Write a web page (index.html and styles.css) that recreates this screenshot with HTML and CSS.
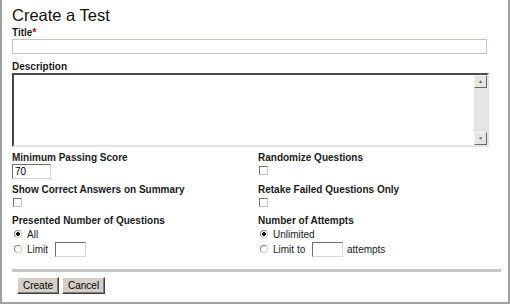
FILE: index.html
```html
<!DOCTYPE html>
<html lang="en">
<head>
    <meta charset="UTF-8">
    <title>Create a Test</title>
    <link rel="stylesheet" href="styles.css">
</head>
<body>

    <div class="panel">
        <h1>Create a Test</h1>

        <label class="lbl">Title<span class="req">*</span></label>
        <input type="text" class="text title-input">

        <label class="lbl">Description</label>
        <div class="textbox">
            <textarea></textarea>
            <div class="scroll">
                <span class="sbtn">&#9650;</span>
                <span class="track"></span>
                <span class="sbtn">&#9660;</span>
            </div>
        </div>

        <div class="grid">
            <div class="field">
                <label class="lbl">Minimum Passing Score</label>
                <input type="text" class="text score" value="70">
            </div>
            <div class="field">
                <label class="lbl">Randomize Questions</label>
                <input type="checkbox" class="check">
            </div>

            <div class="field">
                <label class="lbl">Show Correct Answers on Summary</label>
                <input type="checkbox" class="check">
            </div>
            <div class="field">
                <label class="lbl">Retake Failed Questions Only</label>
                <input type="checkbox" class="check">
            </div>

            <div class="field">
                <label class="lbl">Presented Number of Questions</label>
                <div class="opt"><input type="radio" name="num" class="radio" checked>All</div>
                <div class="opt"><input type="radio" name="num" class="radio">Limit <input type="text" class="text small"></div>
            </div>
            <div class="field">
                <label class="lbl">Number of Attempts</label>
                <div class="opt"><input type="radio" name="att" class="radio" checked>Unlimited</div>
                <div class="opt"><input type="radio" name="att" class="radio">Limit to <input type="text" class="text small">attempts</div>
            </div>
        </div>

        <div class="sep"></div>

        <div class="actions">
            <button class="btn">Create</button>
            <button class="btn">Cancel</button>
        </div>
    </div>

</body>
</html>
```

FILE: styles.css
```css
body {
    margin: 0;
    background-color: #fff;
    font-family: "Liberation Sans", Arial, sans-serif;
    color: #1a1a1a;
}

.panel {
    width: 510px;
    height: 304px;
    box-sizing: border-box;
    border: 2px solid #a0a0a0;
    border-top: none;
    padding: 5px 0 0 10px;
}

h1 {
    margin: 0;
    font-size: 16.5px;
    font-weight: normal;
    line-height: 21px;
    color: #111;
}

.lbl {
    display: block;
    font-size: 10px;
    font-weight: bold;
    line-height: 13px;
}
.req {
    color: #c00;
}

.text {
    box-sizing: border-box;
    height: 15px;
    margin: 0;
    padding: 0 2px;
    font-family: inherit;
    font-size: 10px;
    border: 1px solid;
    border-color: #6f6f6f #d8d8d8 #d8d8d8 #6f6f6f;
    background: #fff;
    outline: none;
}
.title-input {
    display: block;
    width: 475px;
    margin-bottom: 6px;
    border-color: #c4c4d6;
}
.score {
    display: block;
    width: 39px;
}
.small {
    width: 31px;
    margin: 0 4px 0 4px;
}

/* Description box with classic scrollbar */
.textbox {
    display: flex;
    width: 477px;
    height: 74px;
    box-sizing: border-box;
    border: 2px solid;
    border-color: #4a4a4a #e4e4e4 #e4e4e4 #4a4a4a;
    margin-bottom: 4px;
}
.textbox textarea {
    flex: 1;
    border: none;
    resize: none;
    outline: none;
    margin: 0;
    padding: 0;
}
.scroll {
    display: flex;
    flex-direction: column;
    width: 13px;
}
.sbtn {
    box-sizing: border-box;
    height: 13px;
    background: #e6e4de;
    border: 1px solid;
    border-color: #f4f4f4 #6a6a6a #6a6a6a #f4f4f4;
    font-size: 5px;
    line-height: 11px;
    text-align: center;
    color: #666;
}
.track {
    flex: 1;
    background: repeating-conic-gradient(#ececec 0 25%, #dedede 0 50%) 0 0 / 2px 2px;
}

.grid {
    display: grid;
    grid-template-columns: 246px 1fr;
    row-gap: 4px;
}

.check {
    -webkit-appearance: none;
    appearance: none;
    display: block;
    width: 9px;
    height: 9px;
    margin: 2px 0 3px 1px;
    border: 1px solid;
    border-color: #7a7a7a #c8c8c8 #c8c8c8 #7a7a7a;
    background: #fff;
}

.opt {
    display: flex;
    align-items: center;
    height: 14px;
    font-size: 10px;
    white-space: pre;
}
.opt + .opt {
    height: 16px;
}
.radio {
    -webkit-appearance: none;
    appearance: none;
    width: 8px;
    height: 8px;
    margin: 0 5px 0 2px;
    border-radius: 50%;
    border: 1px solid;
    border-color: #8a8a8a #d0d0d0 #d0d0d0 #8a8a8a;
    background: #fff;
}
.radio:checked {
    background: radial-gradient(circle, #111 0 1.6px, #fff 2.2px);
}

.sep {
    width: 489px;
    height: 3px;
    margin-top: 12px;
    background-color: #c6c6c6;
}

.actions {
    display: flex;
    gap: 3px;
    padding: 5px 0 0 5px;
}
.btn {
    height: 17px;
    padding: 0 5px;
    font-family: inherit;
    font-size: 10px;
    color: #000;
    background-color: #d4d0c8;
    border: 1px solid;
    border-color: #fff #404040 #404040 #fff;
    box-shadow: inset -1px -1px 0 #808080;
}
```
